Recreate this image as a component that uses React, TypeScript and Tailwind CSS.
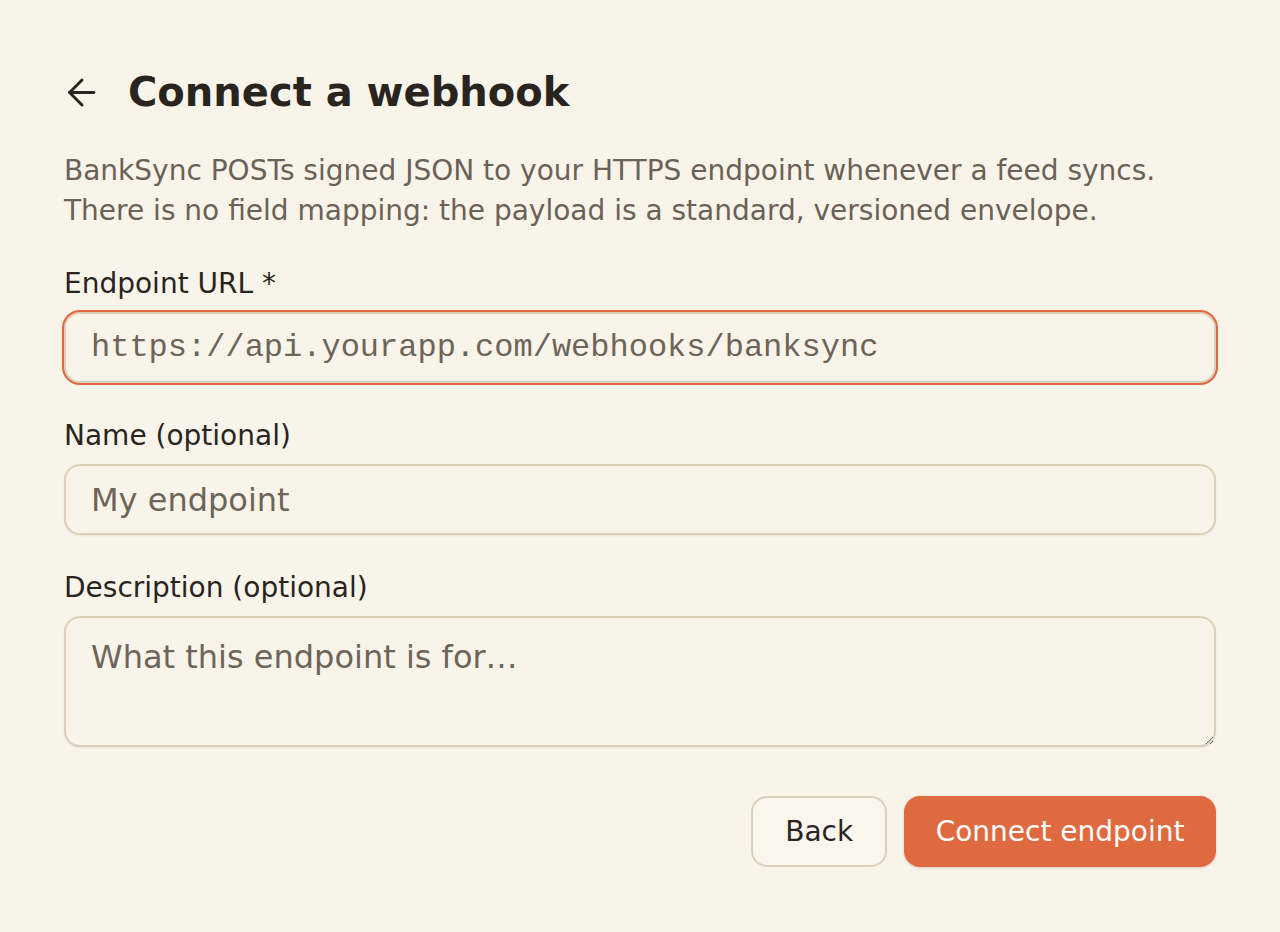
import { useState } from "react";

const ArrowBack = () => (
    <svg width="29" height="29" viewBox="0 0 28 28" fill="none" stroke="currentColor" strokeWidth="2.8" strokeLinecap="round" strokeLinejoin="round">
        <path d="M26 14H2.5" />
        <path d="M14.5 2 2.5 14l12 12" />
    </svg>
);

const labelCls = "block pt-[2px] text-[28px] leading-[40px] text-[#2a241e] mb-[8px]";
const fieldCls =
    "w-full rounded-[16px] border-2 border-[#ddd0bb] bg-[#f9f4ea] px-[25px] text-[32px] text-[#2a241e] placeholder:text-[#6e6458] outline-none shadow-[0_1px_2px_rgba(120,100,70,0.12)]";

export default function App() {
    const [url, setUrl] = useState("");
    const [name, setName] = useState("");
    const [desc, setDesc] = useState("");

    return (
        <div className="min-h-screen bg-[#f9f4ea] font-['DejaVu_Sans',sans-serif]">
            <div className="px-16 pt-[62px]">
                {/* Header */}
                <div className="flex items-center">
                    <button type="button" className="ml-[3px] mr-[32px] text-[#2a241e]" aria-label="Back">
                        <ArrowBack />
                    </button>
                    <h1 className="text-[40px] leading-[60px] font-bold text-[#2a241e]">Connect a webhook</h1>
                </div>

                <p className="mt-[29px] text-[28px] leading-[40px] text-[#6b6156]">
                    BankSync POSTs signed JSON to your HTTPS endpoint whenever a feed syncs.
                    <br />
                    There is no field mapping: the payload is a standard, versioned envelope.
                </p>

                {/* Form */}
                <form className="mt-[31px] flex flex-col gap-[31px]">
                    <div>
                        <label className={labelCls}>Endpoint URL *</label>
                        <input
                            value={url}
                            onChange={(e) => setUrl(e.target.value)}
                            placeholder="https://api.yourapp.com/webhooks/banksync"
                            className={`${fieldCls} h-[71px] font-['Liberation_Mono',monospace] ring-2 ring-[#e06a40]`}
                        />
                    </div>
                    <div>
                        <label className={labelCls}>Name (optional)</label>
                        <input
                            value={name}
                            onChange={(e) => setName(e.target.value)}
                            placeholder="My endpoint"
                            className={`${fieldCls} h-[71px]`}
                        />
                    </div>
                    <div>
                        <label className={labelCls}>Description (optional)</label>
                        <textarea
                            value={desc}
                            onChange={(e) => setDesc(e.target.value)}
                            placeholder="What this endpoint is for…"
                            className={`${fieldCls} block h-[131px] py-[15px] leading-[48px]`}
                        />
                    </div>

                    <div className="mt-[18px] flex justify-end gap-[17px]">
                        <button
                            type="button"
                            className="h-[71px] rounded-[16px] border-2 border-[#ddd0bb] bg-[#faf6ee] px-[32px] text-[28px] text-[#2a241e]"
                        >
                            Back
                        </button>
                        <button
                            type="submit"
                            className="h-[71px] rounded-[16px] border-2 border-[#e06a40] bg-[#e06a40] px-[29.5px] text-[28px] text-white shadow-[0_1px_3px_rgba(120,60,30,0.2)]"
                        >
                            Connect endpoint
                        </button>
                    </div>
                </form>
            </div>
        </div>
    );
}
